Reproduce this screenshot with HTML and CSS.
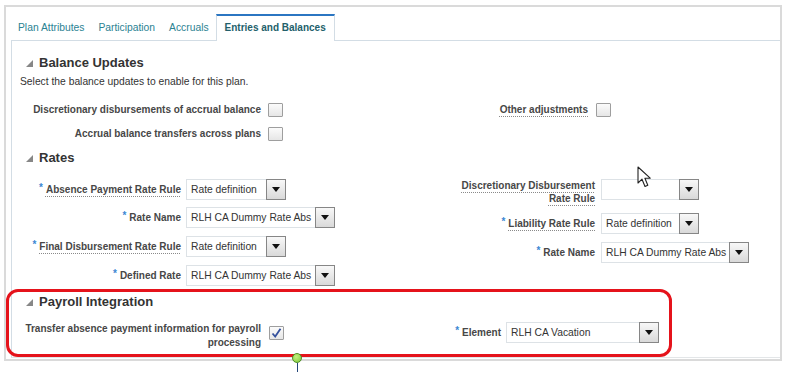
FILE: index.html
```html
<!DOCTYPE html>
<html lang="en">
<head>
  <meta charset="UTF-8">
  <meta name="viewport" content="width=device-width, initial-scale=1.0">
  <title>Entries and Balances</title>
  <link rel="stylesheet" href="styles.css">
</head>
<body>
  <div class="frame">
    <div class="tabs">
      <span class="tab">Plan Attributes</span>
      <span class="tab">Participation</span>
      <span class="tab">Accruals</span>
      <span class="tab active">Entries and Balances</span>
    </div>

    <div class="panel">
      <!-- Balance Updates -->
      <h2 class="sec-head first"><span class="disc"></span>Balance Updates</h2>
      <p class="hint">Select the balance updates to enable for this plan.</p>
      <div class="form bal">
        <div class="col c1">
          <div class="field">
            <label class="lbl">Discretionary disbursements of accrual balance</label>
            <span class="ctl"><span class="chk"></span></span>
          </div>
          <div class="field">
            <label class="lbl">Accrual balance transfers across plans</label>
            <span class="ctl"><span class="chk"></span></span>
          </div>
        </div>
        <div class="col c2">
          <div class="field">
            <label class="lbl"><span class="help">Other adjustments</span></label>
            <span class="ctl"><span class="chk"></span></span>
          </div>
        </div>
      </div>

      <!-- Rates -->
      <h2 class="sec-head"><span class="disc"></span>Rates</h2>
      <div class="form rates">
        <div class="col c1">
          <div class="field">
            <label class="lbl"><span class="req">*</span><span class="help">Absence Payment Rate Rule</span></label>
            <span class="ctl"><span class="sel sel-s"><span class="val">Rate definition</span><span class="btn"><i class="tri"></i></span></span></span>
          </div>
          <div class="field">
            <label class="lbl"><span class="req">*</span>Rate Name</label>
            <span class="ctl"><span class="sel sel-l"><span class="val">RLH CA Dummy Rate Abs</span><span class="btn"><i class="tri"></i></span></span></span>
          </div>
          <div class="field">
            <label class="lbl"><span class="req">*</span><span class="help">Final Disbursement Rate Rule</span></label>
            <span class="ctl"><span class="sel sel-s"><span class="val">Rate definition</span><span class="btn"><i class="tri"></i></span></span></span>
          </div>
          <div class="field">
            <label class="lbl"><span class="req">*</span>Defined Rate</label>
            <span class="ctl"><span class="sel sel-l"><span class="val">RLH CA Dummy Rate Abs</span><span class="btn"><i class="tri"></i></span></span></span>
          </div>
        </div>
        <div class="col c2">
          <div class="field">
            <label class="lbl two"><span class="help">Discretionary Disbursement<br>Rate Rule</span></label>
            <span class="ctl"><span class="sel sel-rs"><span class="val"></span><span class="btn"><i class="tri"></i></span></span></span>
          </div>
          <div class="field">
            <label class="lbl"><span class="req">*</span><span class="help">Liability Rate Rule</span></label>
            <span class="ctl"><span class="sel sel-rs"><span class="val">Rate definition</span><span class="btn"><i class="tri"></i></span></span></span>
          </div>
          <div class="field">
            <label class="lbl"><span class="req">*</span>Rate Name</label>
            <span class="ctl"><span class="sel sel-rl"><span class="val">RLH CA Dummy Rate Abs</span><span class="btn"><i class="tri"></i></span></span></span>
          </div>
        </div>
      </div>

      <!-- Payroll Integration -->
      <h2 class="sec-head payroll"><span class="disc"></span>Payroll Integration</h2>
      <div class="form pay">
        <div class="col c1">
          <div class="field">
            <label class="lbl two">Transfer absence payment information for payroll<br>processing</label>
            <span class="ctl">
              <span class="chk on">
                <svg width="13" height="12" viewBox="0 0 13 12"><path d="M2.5 6.5 L5.2 9.5 L10.5 1.8" fill="none" stroke="#34509c" stroke-width="1.8"/></svg>
              </span>
            </span>
          </div>
        </div>
        <div class="col c2">
          <div class="field">
            <label class="lbl"><span class="req">*</span>Element</label>
            <span class="ctl"><span class="sel sel-el"><span class="val">RLH CA Vacation</span><span class="btn"><i class="tri"></i></span></span></span>
          </div>
        </div>
      </div>
    </div>
  </div>

  <!-- annotations over the screenshot -->
  <div class="callout"></div>
  <div class="pin"></div>
  <div class="pin-line"></div>
  <svg class="cursor" width="16" height="23" viewBox="0 0 16 23">
    <path d="M1 1 L1 17 L5 13.2 L8 20.5 L10.8 19.3 L7.9 12.2 L13.2 12.2 Z" fill="#fff" stroke="#222" stroke-width="1.1" stroke-linejoin="round"/>
  </svg>
</body>
</html>
```

FILE: styles.css
```css
* {
  margin: 0;
  padding: 0;
  box-sizing: border-box;
}
body {
  position: relative;
  width: 788px;
  height: 372px;
  overflow: hidden;
  background-color: #fff;
  font-family: "Liberation Sans", Arial, sans-serif;
  color: #333;
}
.frame {
  margin: 5px 6px 0 4px;
  height: 356px;
  border: 2px solid #dadada;
}

/* Tabs */
.tabs {
  display: flex;
  align-items: flex-start;
  height: 33px;
  padding: 7px 0 0 5px;
}
.tab {
  padding: 0 7px;
  border-top: 2px solid transparent;
  line-height: 24px;
  font-size: 10.3px;
  color: #2b8292;
  white-space: nowrap;
}
.tab.active {
  position: relative;
  z-index: 1;
  height: 27px;
  margin-bottom: -1px;
  padding: 0 8px;
  border: 1px solid #d3dde5;
  border-top: 2px solid #2b76c2;
  border-bottom: none;
  background-color: #fff;
  font-size: 10px;
  font-weight: bold;
  color: #235f6b;
}

/* Panel */
.panel {
  height: 318px;
  margin-left: 5px;
  border-top: 1px solid #d3dde5;
  border-left: 1px solid #d3dde5;
  border-bottom: 1px solid #e3e6e8;
}
.sec-head {
  margin-top: 2px;
  padding-left: 14px;
  font-size: 13px;
  font-weight: bold;
  line-height: 20px;
  color: #333;
}
.sec-head.first {
  margin-top: 12px;
}
.sec-head.payroll {
  margin-top: 6px;
}
.disc {
  display: inline-block;
  width: 0;
  height: 0;
  margin-right: 6px;
  border-left: 7px solid transparent;
  border-bottom: 7px solid #878787;
}
.hint {
  margin-top: 2px;
  padding-left: 8px;
  font-size: 10.3px;
  line-height: 14px;
  color: #333;
}

/* Forms */
.form {
  display: grid;
  grid-template-columns: 388px 1fr;
}
.col {
  display: flex;
  flex-direction: column;
  gap: 7.7px;
}
.field {
  display: flex;
  align-items: flex-start;
}
.lbl {
  flex: none;
  text-align: right;
  font-size: 10px;
  font-weight: bold;
  line-height: 21px;
  color: #474747;
  white-space: nowrap;
}
.lbl.two {
  line-height: 13.5px;
}
.ctl {
  display: flex;
  align-items: center;
  height: 21px;
}
.help {
  text-decoration: underline dotted #8a8a8a;
  text-underline-offset: 3px;
}
.req {
  position: relative;
  top: -2px;
  margin-right: 3px;
  color: #3c88d3;
}

.bal {
  margin-top: 9px;
}
.bal .col {
  gap: 0;
}
.bal .lbl {
  line-height: 24px;
}
.bal .ctl {
  height: 24px;
}
.bal .c1 .lbl { width: 249px; }
.bal .c1 .ctl { margin-left: 7px; }
.bal .c2 .lbl { width: 188px; }
.bal .c2 .ctl { margin-left: 8px; }

.rates {
  margin-top: 10.5px;
}
.rates .c1 .lbl { width: 169px; }
.rates .c1 .ctl { margin-left: 5px; }
.rates .c2 .lbl { width: 195px; }
.rates .c2 .ctl { margin-left: 6px; }

.pay {
  margin-top: 10.5px;
}
.pay .c1 .lbl { width: 249px; }
.pay .c1 .ctl { margin-left: 7.5px; }
.pay .c2 .lbl { width: 101px; }
.pay .c2 .ctl { margin-left: 5px; }

/* Controls */
.chk {
  display: flex;
  align-items: center;
  justify-content: center;
  width: 15px;
  height: 14px;
  border: 1px solid #9e9e9e;
  border-radius: 1px;
  background: linear-gradient(#fbfbfb, #e6e6e6);
}
.sel {
  display: flex;
  height: 21px;
  border: 1px solid #dde2e6;
  background-color: #fff;
}
.sel .val {
  flex: 1;
  padding-left: 4px;
  font-size: 10.3px;
  line-height: 19px;
  color: #333;
  white-space: nowrap;
  overflow: hidden;
}
.sel .btn {
  display: flex;
  align-items: center;
  justify-content: center;
  width: 20px;
  margin: -1px -1px -1px 0;
  border: 1px solid #868686;
  background: linear-gradient(#f8f8f8, #d9d9d9);
}
.tri {
  width: 0;
  height: 0;
  border-left: 4px solid transparent;
  border-right: 4px solid transparent;
  border-top: 5px solid #111;
}
.sel-s { width: 100px; }
.sel-l { width: 149px; }
.sel-rs { width: 98px; }
.sel-rl { width: 148px; }
.sel-el { width: 153px; }

/* Annotations */
.callout {
  position: absolute;
  left: 6px;
  top: 289px;
  width: 666px;
  height: 68px;
  border: 3px solid #e5131b;
  border-radius: 12px;
}
.pin {
  position: absolute;
  left: 292px;
  top: 353px;
  width: 10px;
  height: 10px;
  border: 1px solid #4d8f25;
  border-radius: 50%;
  background: radial-gradient(circle at 40% 35%, #c4f07e, #7cc83a);
}
.pin-line {
  position: absolute;
  left: 297px;
  top: 363px;
  width: 1px;
  height: 9px;
  background-color: #23467a;
}
.cursor {
  position: absolute;
  left: 637px;
  top: 166px;
}
```
